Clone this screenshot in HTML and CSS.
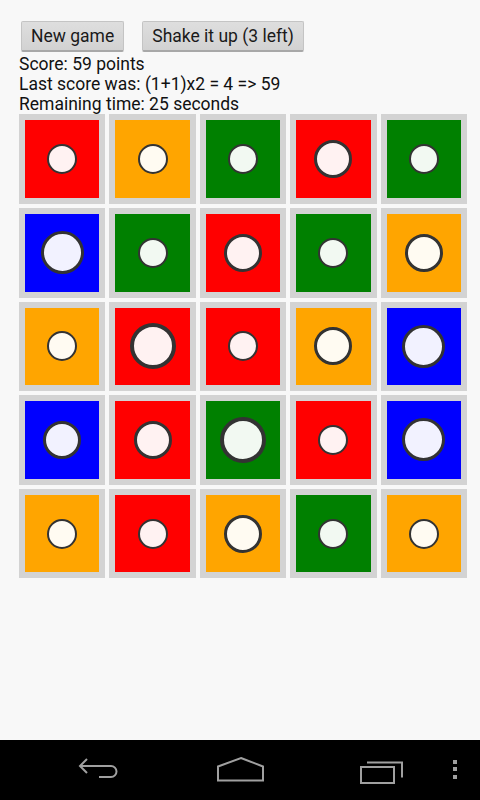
FILE: index.html
```html
<!DOCTYPE html>
<html lang="en">
<head>
  <meta charset="UTF-8">
  <meta name="viewport" content="width=device-width, initial-scale=1.0">
  <title>Shake it up</title>
  <link rel="stylesheet" href="styles.css">
</head>
<body>

  <div class="screen">
    <div class="game">
      <div class="controls">
        <button class="btn">New game</button>
        <button class="btn">Shake it up (3 left)</button>
      </div>

      <div class="status">
        <div>Score: 59 points</div>
        <div>Last score was: (1+1)x2 = 4 =&gt; 59</div>
        <div>Remaining time: 25 seconds</div>
      </div>

      <div class="board">
        <div class="tile"><div class="face red"><span class="dot s1"></span></div></div>
        <div class="tile"><div class="face orange"><span class="dot s1"></span></div></div>
        <div class="tile"><div class="face green"><span class="dot s1"></span></div></div>
        <div class="tile"><div class="face red"><span class="dot s2"></span></div></div>
        <div class="tile"><div class="face green"><span class="dot s1"></span></div></div>

        <div class="tile"><div class="face blue"><span class="dot s3"></span></div></div>
        <div class="tile"><div class="face green"><span class="dot s1"></span></div></div>
        <div class="tile"><div class="face red"><span class="dot s2"></span></div></div>
        <div class="tile"><div class="face green"><span class="dot s1"></span></div></div>
        <div class="tile"><div class="face orange"><span class="dot s2"></span></div></div>

        <div class="tile"><div class="face orange"><span class="dot s1"></span></div></div>
        <div class="tile"><div class="face red"><span class="dot s4"></span></div></div>
        <div class="tile"><div class="face red"><span class="dot s1"></span></div></div>
        <div class="tile"><div class="face orange"><span class="dot s2"></span></div></div>
        <div class="tile"><div class="face blue"><span class="dot s3"></span></div></div>

        <div class="tile"><div class="face blue"><span class="dot s2"></span></div></div>
        <div class="tile"><div class="face red"><span class="dot s2"></span></div></div>
        <div class="tile"><div class="face green"><span class="dot s4"></span></div></div>
        <div class="tile"><div class="face red"><span class="dot s1"></span></div></div>
        <div class="tile"><div class="face blue"><span class="dot s3"></span></div></div>

        <div class="tile"><div class="face orange"><span class="dot s1"></span></div></div>
        <div class="tile"><div class="face red"><span class="dot s1"></span></div></div>
        <div class="tile"><div class="face orange"><span class="dot s2"></span></div></div>
        <div class="tile"><div class="face green"><span class="dot s1"></span></div></div>
        <div class="tile"><div class="face orange"><span class="dot s1"></span></div></div>
      </div>
    </div>

    <div class="navbar">
      <svg class="nav-icon back" width="48" height="30" viewBox="0 0 48 30">
        <path d="M9 5 L2 12 L9 19 M2 12 H33 A5.5 5.5 0 0 1 33 23 H21" fill="none" stroke="#a0a0a0" stroke-width="2"/>
      </svg>
      <svg class="nav-icon home" width="50" height="30" viewBox="0 0 50 30">
        <path d="M25 3 L47 11.5 V25.5 H2 V11.5 Z" fill="none" stroke="#a0a0a0" stroke-width="2"/>
      </svg>
      <svg class="nav-icon recent" width="46" height="30" viewBox="0 0 46 30">
        <path d="M8 5.5 H43 V20.5" fill="none" stroke="#a0a0a0" stroke-width="2"/>
        <rect x="2" y="10" width="33" height="16" fill="none" stroke="#a0a0a0" stroke-width="2"/>
      </svg>
      <div class="menu">
        <span></span><span></span><span></span>
      </div>
    </div>
  </div>

</body>
</html>
```

FILE: styles.css
```css
* {
  box-sizing: border-box;
}

body {
  margin: 0;
  background-color: #f8f8f8;
  font-family: Roboto, "Noto Sans", sans-serif;
  color: #111;
}

.screen {
  height: 800px;
  display: flex;
  flex-direction: column;
}

.game {
  flex: 1;
  padding: 21px 13px 0 19px;
}

.controls {
  display: flex;
  gap: 18px;
  padding-left: 2px;
}

.btn {
  height: 31px;
  padding: 0 9px;
  font-family: Roboto, "Noto Sans", sans-serif;
  font-size: 17.5px;
  color: #1a1a1a;
  background: linear-gradient(#dedede, #d2d2d2);
  border: 1px solid #c4c4c4;
  border-bottom: 2px solid #a8a8a8;
  border-radius: 2px;
}

.status {
  margin-top: 3px;
  font-size: 17.5px;
  line-height: 19.8px;
}

.board {
  display: grid;
  grid-template-columns: repeat(5, 1fr);
  grid-auto-rows: 89.6px;
  gap: 4px;
}

.tile {
  background-color: #d3d3d3;
  padding: 6px;
}

.face {
  height: 100%;
  display: flex;
  align-items: center;
  justify-content: center;
}

.red { background-color: #ff0000; }
.orange { background-color: #ffa500; }
.green { background-color: #008000; }
.blue { background-color: #0000ff; }

.dot {
  display: block;
  border-radius: 50%;
  background-color: rgba(255, 255, 255, 0.95);
  border: 2px solid #333;
}

.s1 { width: 30px; height: 30px; }
.s2 { width: 38px; height: 38px; border-width: 3px; }
.s3 { width: 43px; height: 43px; border-width: 3px; }
.s4 { width: 46px; height: 46px; border-width: 4px; }

.navbar {
  height: 60px;
  background-color: #000;
  position: relative;
}

.nav-icon {
  position: absolute;
  top: 14px;
}

.back { left: 78px; }
.home { left: 216px; top: 15px; }
.recent { left: 359px; top: 17px; }

.menu {
  position: absolute;
  left: 453px;
  top: 20px;
  display: flex;
  flex-direction: column;
  gap: 3.3px;
}

.menu span {
  width: 4px;
  height: 4px;
  background-color: #a0a0a0;
}
```
